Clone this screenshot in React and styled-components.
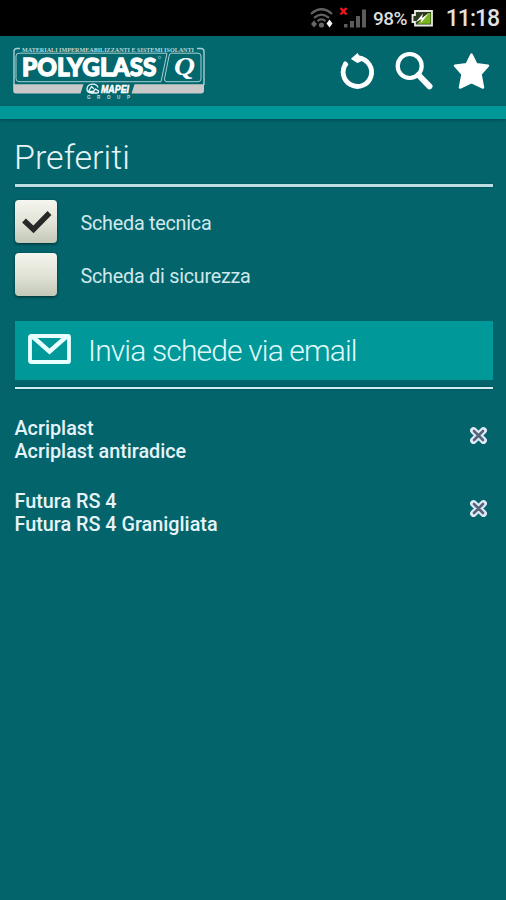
import React, { useState } from 'react';
import styled, { createGlobalStyle } from 'styled-components';

const GlobalStyle = createGlobalStyle`
  * {
    box-sizing: border-box;
  }
  body {
    margin: 0;
    background: #03646b;
    font-family: Roboto, 'Liberation Sans', sans-serif;
    color: #e6f4f9;
  }
`;

const Screen = styled.div`
  height: 900px;
  overflow: hidden;
  background: #03646b;
`;

const StatusBar = styled.div`
  display: flex;
  align-items: center;
  height: 36px;
  padding: 0 8px 0 310px;
  background: #000;
  white-space: nowrap;
`;

const StatusIcons = styled.svg`
  flex: none;
  display: block;
`;

const Percent = styled.span`
  width: 36px;
  margin: 2px 4px 0 5px;
  font-size: 19px;
  font-weight: 500;
  line-height: 22px;
  letter-spacing: -0.6px;
  color: #dcdcdc;
`;

const Clock = styled.span`
  margin: 2px 0 0 13px;
  font-size: 23px;
  font-weight: 500;
  line-height: 26px;
  letter-spacing: -1px;
  color: #e2e2e2;
`;

const Header = styled.header`
  display: flex;
  align-items: flex-start;
  justify-content: space-between;
  height: 70px;
  padding: 8px 16px 0 12px;
  background: #03676e;
`;

const Strip = styled.div`
  height: 13px;
  background: #009799;
  box-shadow: 0 1px 3px rgba(0, 50, 56, 0.6);
`;

const Actions = styled.div`
  display: flex;
  gap: 19px;
  padding-top: 7px;
`;

const ActionButton = styled.button`
  width: 38px;
  height: 40px;
  padding: 0;
  border: 0;
  background: none;

  svg {
    display: block;
  }
`;

const Content = styled.main`
  padding: 17px 13px 0 15px;
`;

const Title = styled.h1`
  height: 48px;
  margin: 0 0 0 -1px;
  font-size: 34px;
  font-weight: 300;
  line-height: 43px;
`;

const Rule = styled.div`
  height: ${({ $thick }) => ($thick ? 3 : 2)}px;
  background: ${({ $thick }) => ($thick ? '#bcdde1' : '#d3eef2')};
  box-shadow: 0 0 2px #02474e;
`;

const Options = styled.div`
  display: flex;
  flex-direction: column;
  gap: 11px;
  padding: 13px 0 25px;
`;

const Option = styled.label`
  display: flex;
  align-items: center;
  gap: 23.5px;
  height: 42.5px;
  margin-left: -0.5px;
  font-size: 19.8px;
  color: #cfe8ec;

  input {
    display: none;
  }
`;

const OptionText = styled.span`
  padding-top: 4px;
  letter-spacing: -0.25px;
`;

const CheckBox = styled.span`
  width: 42.5px;
  height: 43px;
  border-radius: 4px;
  background: linear-gradient(#f5f6ee, #dfe2d5 55%, #c3c8b8);
  box-shadow: 0 1px 3px rgba(0, 30, 34, 0.8);
`;

const SendButton = styled.button`
  display: flex;
  align-items: center;
  gap: 17px;
  width: 100%;
  height: 59px;
  margin-bottom: 7px;
  padding: 0 13px;
  border: 0;
  background: #009899;
  color: #e0fafc;
  font: 300 30px/40px Roboto, 'Liberation Sans', sans-serif;
  letter-spacing: -0.85px;

  svg {
    margin-top: -3px;
  }
`;

const List = styled.ul`
  display: flex;
  flex-direction: column;
  gap: 28px;
  margin: 0;
  padding: 29px 5px 0 0;
  list-style: none;
`;

const Item = styled.li`
  display: flex;
  justify-content: space-between;
  margin-left: -0.5px;
  font-size: 19.8px;
  font-weight: 500;
  line-height: 22.5px;
`;

const RemoveButton = styled.button`
  width: 19px;
  height: 19px;
  margin-top: 8px;
  padding: 0;
  border: 0;
  background: none;

  svg {
    display: block;
  }
`;

const WifiSignal = () => (
  <StatusIcons width="58" height="30" viewBox="310 3 58 30">
    <g fill="none" stroke="#626262" strokeWidth="2.2">
      <path d="M311 14q10.500-9.500 21 0" />
      <path d="M314 17.800q7.500-6.500 15 0" />
      <path d="M317.500 21.200q4-3.500 8 0" />
    </g>
    <circle cx="321.500" cy="25" r="2.600" fill="#666" />
    <path d="M314 20.500l3 3.500-3 3.500-3-3.500z" fill="#666" />
    <path d="M329.500 19.500l3 4-3 4-3-4z" fill="#f2f2f2" />
    <path d="M344 24h3.500v3.500H344zM350 21h4v6.500h-4zM356 16h4v11.500h-4zM362 9.500h4v18h-4z" fill="#5c5c5c" />
    <path d="M340.500 8l6 6.500M346.500 8l-6 6.500" stroke="#f0141c" strokeWidth="2.500" />
  </StatusIcons>
);

const Battery = () => (
  <StatusIcons width="22" height="18" viewBox="0 0 22 18">
    <path d="M4 2h17v14.500H4v-3.500H1.500v-7H4z" fill="#2b3a20" stroke="#e8ebe2" strokeWidth="1.800" />
    <path d="M6 14.800L17 4h2.500v10.800z" fill="#79b51c" />
    <path d="M4.500 13.500l7.500-9-1 4.500 6.500-4.500-8 10 1-4.500z" fill="#fff" />
  </StatusIcons>
);

const Logo = () => (
  <svg width="194" height="58" viewBox="12 44 194 58">
    <g fill="none" stroke="#a9cfd2">
      <path d="M20 48.500h-3q-3 0-3 3V85M197 48.500h4q3 0 3 3V85" strokeWidth="1.400" />
      <path d="M19 53.200H167l-6 28.500H19q-3-.3-3-3V56q0-2.800 3-2.800z" strokeWidth="1" />
      <path d="M171.500 53.200H198q3 0 3 3v22.500q0 3-3 3H167q-3 0-2.500-3l4.500-22.500q.5-3 2.500-3z" strokeWidth="1" />
    </g>
    <path d="M13.200 84.200H83.500L80.500 93.500H16q-2.800 0-2.800-3zM134.500 84.200H204v6.300q0 3-3 3H131.500z" fill="#c9c9c9" />
    <text x="22" y="51.600" textLength="172" lengthAdjust="spacingAndGlyphs" fill="#b8d8da" fontFamily="Liberation Serif" fontWeight="700" fontSize="6.200">
      MATERIALI IMPERMEABILIZZANTI E SISTEMI ISOLANTI
    </text>
    <text x="22" y="76.300" textLength="134.500" lengthAdjust="spacingAndGlyphs" fill="#fff" stroke="#fff" strokeWidth="1.300" fontFamily="Lato, Liberation Sans" fontWeight="900" fontSize="25.500">
      POLYGLASS
    </text>
    <circle cx="159.500" cy="57.500" r="1.200" fill="none" stroke="#a9cfd2" strokeWidth="0.600" />
    <text x="174" y="75" fill="#fff" fontFamily="Liberation Serif" fontWeight="700" fontStyle="italic" fontSize="26" textLength="21" lengthAdjust="spacingAndGlyphs">
      Q
    </text>
    <path d="M98 87.500q-1-3.500-5.500-3.300-5 .3-5.500 4.500-.3 4 4.500 4.300h5q2.500 0 2-2l-3-2-2 2.500h-5l3-5 2.500 2.500" fill="none" stroke="#eef7f7" strokeWidth="1.300" />
    <text x="101" y="92.600" textLength="28" lengthAdjust="spacingAndGlyphs" fill="#fff" stroke="#fff" strokeWidth="0.500" fontFamily="Liberation Sans" fontWeight="700" fontStyle="italic" fontSize="10">
      MAPEI
    </text>
    <text x="87" y="98.600" textLength="43" fill="#c4dfe1" fontFamily="Liberation Sans" fontWeight="700" fontSize="4.600">
      GROUP
    </text>
  </svg>
);

const Refresh = () => (
  <svg width="38" height="40" viewBox="338 51 38 40">
    <path d="M346.300 63.300A14.200 14.200 0 1 0 359 58.100" fill="none" stroke="#fff" strokeWidth="4.800" />
    <path d="M351.500 58.800l6-5.300 1 2.300 4 1-2 4.500-3.200 1.200z" fill="#fff" stroke="#fff" strokeLinejoin="round" />
    <path d="M345.200 63.300l1 1" stroke="#fff" strokeWidth="4" strokeLinecap="round" />
  </svg>
);

const Search = () => (
  <svg width="38" height="40" viewBox="395 51 38 40">
    <circle cx="409.700" cy="66" r="12" fill="none" stroke="#fff" strokeWidth="4.200" />
    <path d="M418.500 75l11 11.300" stroke="#fff" strokeWidth="6" strokeLinecap="round" />
  </svg>
);

const Star = () => (
  <svg width="38" height="40" viewBox="452 51 38 40">
    <path
      d="M471.500 54.500l4.800 9.700 11.700 1.500-7.500 8.500 2.500 13.300-11.500-5.500-11.500 5.500 2.500-13.300-7.500-8.500 11.700-1.500z"
      fill="#fff"
      stroke="#fff"
      strokeWidth="2.500"
      strokeLinejoin="round"
    />
  </svg>
);

const CheckMark = () => (
  <svg width="42" height="43" viewBox="0 0 42 43">
    <path d="M9 20.500l9.500 9L34.500 13" fill="none" stroke="#282828" strokeWidth="5.500" />
  </svg>
);

const Envelope = () => (
  <svg width="43" height="30" viewBox="0 0 43 30">
    <rect x="2" y="2" width="39" height="26" rx="1" fill="none" stroke="#e9ffff" strokeWidth="3.800" />
    <path d="M5 3l16.500 14.500L38 3" fill="none" stroke="#e9ffff" strokeWidth="4.400" />
  </svg>
);

const Cross = () => (
  <svg width="19" height="19" viewBox="0 0 19 19">
    <path d="M4.500 4.500l10 10M14.500 4.500l-10 10" stroke="#dfeaf4" strokeWidth="6.800" strokeLinecap="round" />
    <path d="M5 5l9 9M14 5l-9 9" stroke="#56657c" strokeWidth="2.600" strokeLinecap="round" />
  </svg>
);

const OPTIONS = [
  { id: 'tecnica', label: 'Scheda tecnica' },
  { id: 'sicurezza', label: 'Scheda di sicurezza' },
];

const FAVOURITES = [
  { group: 'Acriplast', name: 'Acriplast antiradice' },
  { group: 'Futura RS 4', name: 'Futura RS 4 Granigliata' },
];

const App = () => {
  const [checked, setChecked] = useState({ tecnica: true, sicurezza: false });
  const [items, setItems] = useState(FAVOURITES);

  const toggle = id => setChecked({ ...checked, [id]: !checked[id] });
  const remove = name => setItems(items.filter(item => item.name !== name));

  return (
    <Screen>
      <GlobalStyle />
      <StatusBar>
        <WifiSignal />
        <Percent>98%</Percent>
        <Battery />
        <Clock>11:18</Clock>
      </StatusBar>
      <Header>
        <Logo />
        <Actions>
          <ActionButton><Refresh /></ActionButton>
          <ActionButton><Search /></ActionButton>
          <ActionButton><Star /></ActionButton>
        </Actions>
      </Header>
      <Strip />
      <Content>
        <Title>Preferiti</Title>
        <Rule $thick />
        <Options>
          {OPTIONS.map(({ id, label }) => (
            <Option key={id}>
              <input type="checkbox" checked={checked[id]} onChange={() => toggle(id)} />
              <CheckBox>{checked[id] && <CheckMark />}</CheckBox>
              <OptionText>{label}</OptionText>
            </Option>
          ))}
        </Options>
        <SendButton>
          <Envelope />
          Invia schede via email
        </SendButton>
        <Rule />
        <List>
          {items.map(({ group, name }) => (
            <Item key={name}>
              <div>
                <div>{group}</div>
                <div>{name}</div>
              </div>
              <RemoveButton onClick={() => remove(name)}><Cross /></RemoveButton>
            </Item>
          ))}
        </List>
      </Content>
    </Screen>
  );
};

export default App;
